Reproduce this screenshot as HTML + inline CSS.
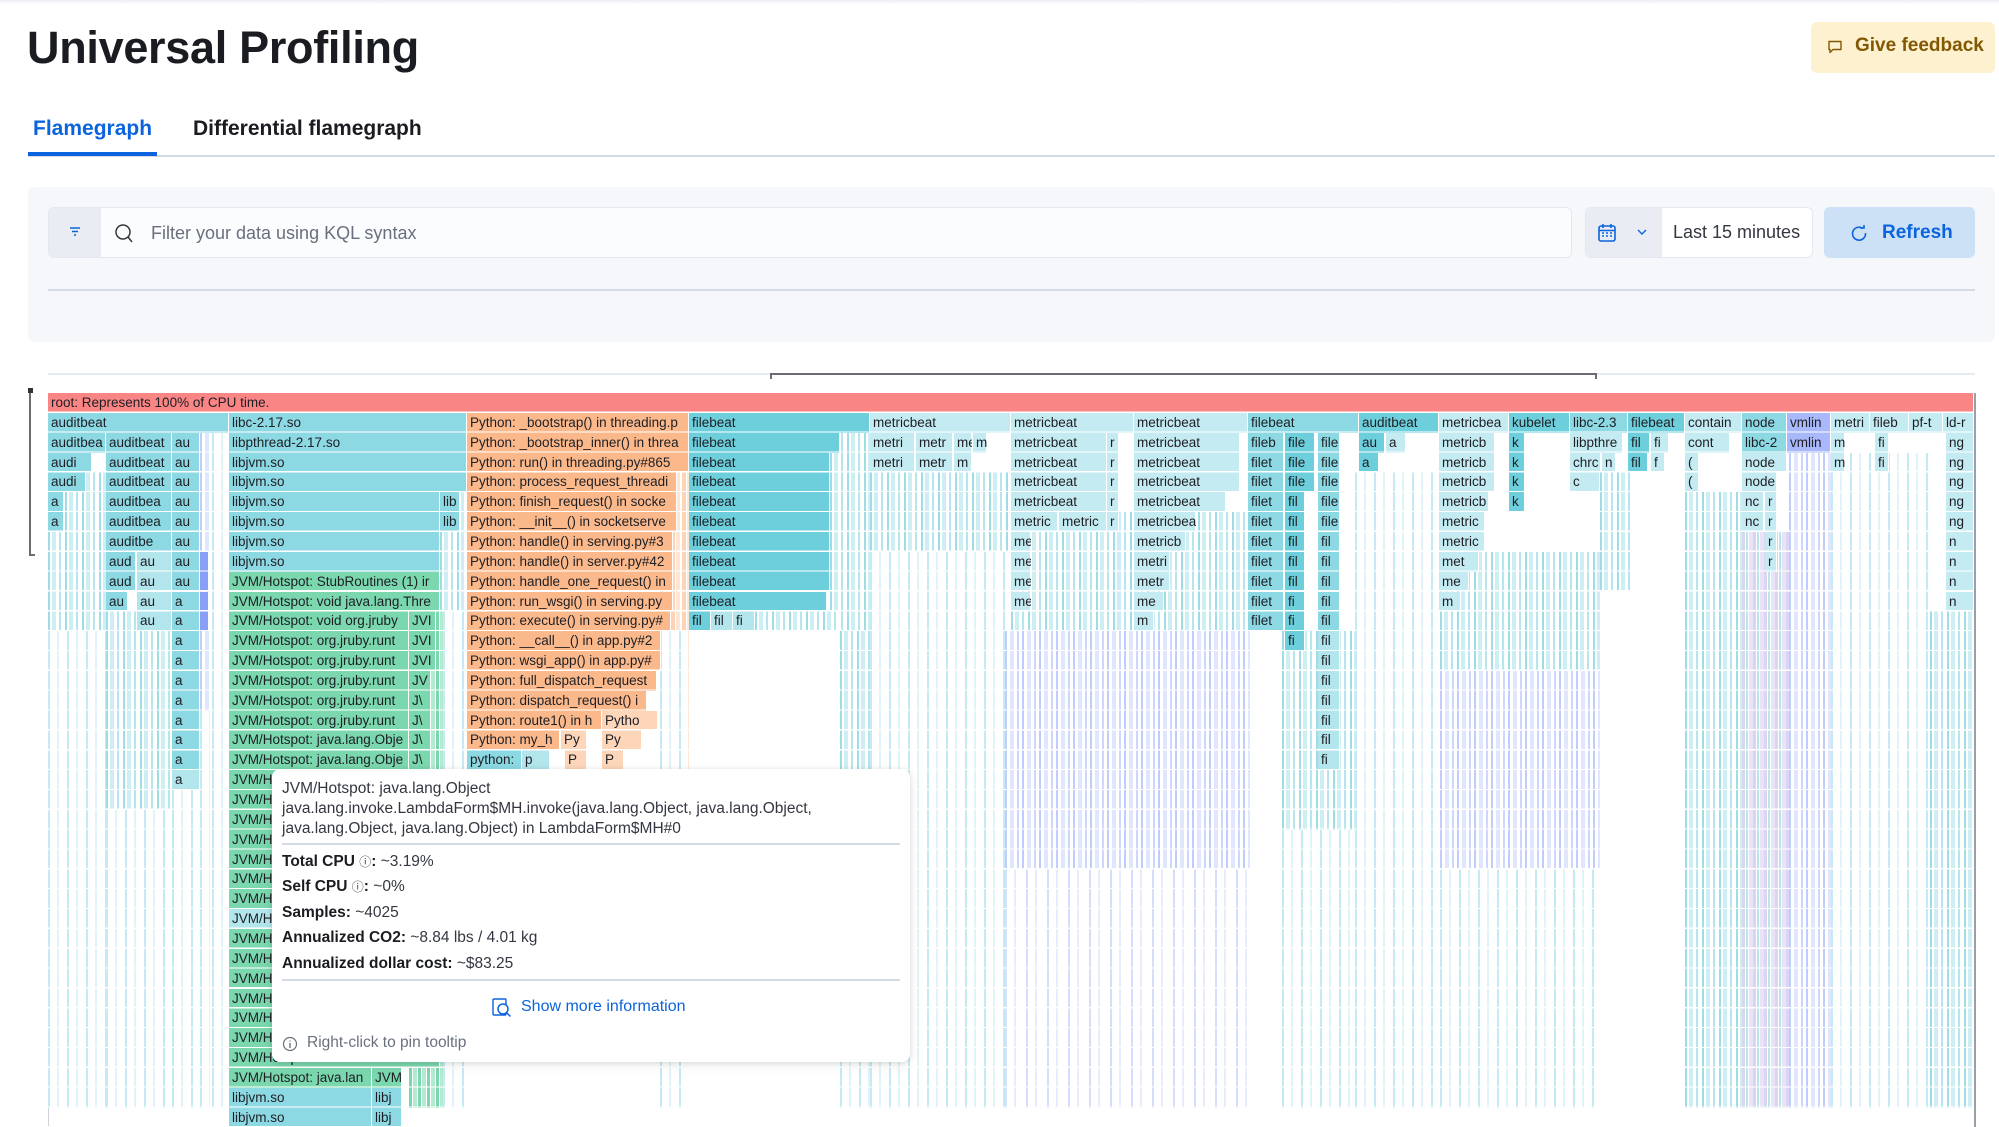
<!DOCTYPE html>
<html><head><meta charset="utf-8">
<style>
*{box-sizing:border-box;margin:0;padding:0}
body{width:1999px;height:1127px;overflow:hidden;background:#fff;font-family:"Liberation Sans",sans-serif;position:relative;color:#1a1c21}
.abs{position:absolute}
.b{position:absolute;display:block;font-style:normal;top:calc(393px + var(--r)*19.85px);height:19.85px;font-size:13.5px;line-height:20px;padding-left:3px;white-space:nowrap;overflow:hidden;color:#1d1e24;box-shadow:inset -1px 0 #fff}
.s{position:absolute;display:block;top:calc(393px + var(--r)*19.85px);height:calc(var(--n)*19.85px)}
.T{background:#8dd9e3}.F{background:#6dcfdc}.M{background:#c4ebf1}.O{background:#fbb98b}.O2{background:#fdd6ba}.G{background:#7ad7ae}.V{background:#a9b8fb}.R{background:#fa8585}.L{background:#b2e5ec}.B{background:#8a9ff8}
.sA{background:repeating-linear-gradient(90deg,#9edde6 0 2px,#fff 2px 4px,#cdeef3 4px 8px,#fff 8px 11px,#b5e6ed 11px 13px,#fff 13px 17px)}
.sB{background:repeating-linear-gradient(90deg,#c0ccfc 0 2px,#fff 2px 5px,#dfe6fe 5px 9px,#fff 9px 12px,#cdd7fd 12px 14px,#fff 14px 17px)}
.sC{background:repeating-linear-gradient(90deg,#c3ebf1 0 2px,#fff 2px 9px,#e0f4f7 9px 11px,#fff 11px 19px)}
.sD{background:repeating-linear-gradient(90deg,#d5defd 0 2px,#fff 2px 9px,#e8edfe 9px 11px,#fff 11px 21px)}
.sE{background:repeating-linear-gradient(90deg,#dcd5f0 0 3px,#fff 3px 4px,#b8e4eb 4px 6px,#fff 6px 7px,#e8e3f6 7px 11px)}
.sG{background:repeating-linear-gradient(90deg,#7ad7ae 0 3px,#fff 3px 4px,#b5ead2 4px 8px,#fff 8px 9px)}
.sO{background:repeating-linear-gradient(90deg,#fcd3b5 0 4px,#fff 4px 5px,#fde6d4 5px 9px,#fff 9px 11px)}
.gaps{position:absolute;left:48px;top:393px;width:1926px;height:734px;background:repeating-linear-gradient(180deg,transparent 0 18.6px,#fff 18.6px 19.85px);pointer-events:none}
.tt{position:absolute;left:272px;top:769px;width:638px;height:293px;background:#fff;border-radius:8px;box-shadow:0 1px 6px rgba(0,0,0,.12),0 4px 14px rgba(0,0,0,.06);font-size:15.5px;color:#343741}
.tt .ln{position:absolute;left:10px;white-space:nowrap}
.tt b{color:#1a1c21}
</style></head><body>
<div class="abs" style="left:0;top:0;width:1999px;height:4px;background:linear-gradient(#eceef2,#fff)"></div>
<div class="abs" style="left:27px;top:26px;font-size:45px;font-weight:bold;line-height:44px;color:#1a1c21;letter-spacing:-0.3px">Universal Profiling</div>
<div class="abs" style="left:1811px;top:22px;width:184px;height:51px;background:#fdf1d0;border-radius:6px"></div>
<svg class="abs" style="left:1827px;top:39px" width="16" height="16" viewBox="0 0 16 16"><path d="M2 2.5h12v8H6l-3 3v-3H2z" fill="none" stroke="#825803" stroke-width="1.4" stroke-linejoin="round"/></svg>
<div class="abs" style="left:1855px;top:35px;font-size:19px;font-weight:bold;color:#825803;line-height:22px">Give feedback</div>
<div class="abs" style="left:33px;top:117px;font-size:21px;font-weight:bold;color:#0b64dd">Flamegraph</div>
<div class="abs" style="left:193px;top:117px;font-size:21px;font-weight:bold;color:#1a1c21">Differential flamegraph</div>
<div class="abs" style="left:28px;top:155px;width:1967px;height:2px;background:#d3dae6"></div>
<div class="abs" style="left:28px;top:152px;width:129px;height:4px;background:#0b64dd"></div>
<div class="abs" style="left:28px;top:187px;width:1967px;height:155px;background:#f5f7fa;border-radius:6px"></div>
<div class="abs" style="left:48px;top:207px;width:1524px;height:51px;background:#fbfcfd;border:1.5px solid #e3e8f0;border-radius:6px"></div>
<div class="abs" style="left:49px;top:208px;width:52px;height:49px;background:#e9edf3;border-radius:5px 0 0 5px"></div>
<svg class="abs" style="left:68px;top:226px" width="14" height="12" viewBox="0 0 14 12"><path d="M2 2h10M4 5.5h6M6 9h2" stroke="#0b64dd" stroke-width="1.4"/></svg>
<svg class="abs" style="left:114px;top:223px" width="20" height="22" viewBox="0 0 20 22"><circle cx="9" cy="9" r="7" fill="none" stroke="#343741" stroke-width="1.5"/><path d="M14 14l4 5" stroke="#343741" stroke-width="1.5"/></svg>
<div class="abs" style="left:151px;top:223px;font-size:18px;color:#69707d">Filter your data using KQL syntax</div>
<div class="abs" style="left:1585px;top:207px;width:228px;height:51px;background:#fff;border:1.5px solid #e3e8f0;border-radius:6px"></div>
<div class="abs" style="left:1586px;top:208px;width:76px;height:49px;background:#e9edf3;border-radius:5px 0 0 5px"></div>
<svg class="abs" style="left:1597px;top:223px" width="20" height="20" viewBox="0 0 20 20"><rect x="2" y="3" width="16" height="15" rx="2" fill="none" stroke="#0b64dd" stroke-width="1.6"/><path d="M2 7.5h16M6 1v4M14 1v4" stroke="#0b64dd" stroke-width="1.6"/><path d="M5 10h2M9 10h2M13 10h2M5 13h2M9 13h2M13 13h2" stroke="#0b64dd" stroke-width="1.5"/></svg>
<svg class="abs" style="left:1636px;top:227px" width="12" height="10" viewBox="0 0 12 10"><path d="M2 3l4 4 4-4" fill="none" stroke="#0b64dd" stroke-width="1.4"/></svg>
<div class="abs" style="left:1673px;top:222px;font-size:18px;color:#343741">Last 15 minutes</div>
<div class="abs" style="left:1824px;top:207px;width:151px;height:51px;background:#cce1f5;border-radius:6px"></div>
<svg class="abs" style="left:1850px;top:223px" width="18" height="20" viewBox="0 0 18 20"><path d="M13 5.5A6.5 6.5 0 1 0 15.5 10" fill="none" stroke="#0b64dd" stroke-width="1.6"/><path d="M10 3h4v-3" fill="none" stroke="#0b64dd" stroke-width="1.6" transform="translate(0,2)"/></svg>
<div class="abs" style="left:1882px;top:222px;font-size:19px;font-weight:bold;color:#0b64dd">Refresh</div>
<div class="abs" style="left:48px;top:289px;width:1927px;height:2px;background:#d3dae6"></div>
<div class="abs" style="left:48px;top:373px;width:1927px;height:2px;background:#e6ebf2"></div>
<div class="abs" style="left:770px;top:373px;width:826px;height:2px;background:#6a6d72"></div>
<div class="abs" style="left:770px;top:373px;width:1.5px;height:6px;background:#6a6d72"></div>
<div class="abs" style="left:1595px;top:373px;width:1.5px;height:6px;background:#6a6d72"></div>
<div class="abs" style="left:29px;top:388px;width:2px;height:168px;background:#6a6d72"></div>
<div class="abs" style="left:28px;top:388px;width:5px;height:5px;background:#333"></div>
<div class="abs" style="left:29px;top:554px;width:6px;height:2px;background:#6a6d72"></div>
<div class="abs" style="left:48px;top:393px;width:1px;height:734px;background:#d0d4da"></div>
<div class="abs" style="left:1974px;top:393px;width:1.5px;height:734px;background:#9aa0a8"></div>

<!-- stripes (background) -->
<i class="s sA" style="--r:4;--n:8;left:48px;width:58px"></i>
<i class="s sC" style="--r:12;--n:24;left:48px;width:58px"></i>
<i class="s sA" style="--r:11;--n:10;left:106px;width:66px"></i>
<i class="s sC" style="--r:21;--n:15;left:106px;width:66px"></i>
<i class="s sC" style="--r:19;--n:17;left:172px;width:28px"></i>
<i class="s sB" style="--r:2;--n:14;left:200px;width:10px"></i>
<i class="s sC" style="--r:16;--n:20;left:200px;width:10px"></i>
<i class="s sC" style="--r:2;--n:34;left:212px;width:14px"></i>
<i class="s sG" style="--r:11;--n:25;left:409px;width:34px"></i>
<i class="s sA" style="--r:5;--n:6;left:440px;width:24px"></i>
<i class="s sC" style="--r:11;--n:25;left:443px;width:22px"></i>
<i class="s sO" style="--r:4;--n:15;left:660px;width:29px"></i>
<i class="s sC" style="--r:12;--n:24;left:660px;width:28px"></i>
<i class="s sA" style="--r:2;--n:10;left:830px;width:40px"></i>
<i class="s sA" style="--r:12;--n:10;left:840px;width:30px"></i>
<i class="s sC" style="--r:22;--n:14;left:840px;width:30px"></i>
<i class="s sA" style="--r:4;--n:4;left:870px;width:140px"></i>
<i class="s sC" style="--r:8;--n:28;left:870px;width:135px"></i>
<i class="s sA" style="--r:6;--n:6;left:1011px;width:239px"></i>
<i class="s sB" style="--r:12;--n:12;left:1005px;width:245px"></i>
<i class="s sD" style="--r:24;--n:12;left:1005px;width:245px"></i>
<i class="s sA" style="--r:12;--n:10;left:1282px;width:73px"></i>
<i class="s sC" style="--r:22;--n:14;left:1282px;width:73px"></i>
<i class="s sC" style="--r:4;--n:32;left:1355px;width:85px"></i>
<i class="s sA" style="--r:8;--n:6;left:1440px;width:160px"></i>
<i class="s sB" style="--r:14;--n:10;left:1440px;width:160px"></i>
<i class="s sC" style="--r:24;--n:12;left:1440px;width:160px"></i>
<i class="s sA" style="--r:4;--n:6;left:1600px;width:30px"></i>
<i class="s sA" style="--r:5;--n:31;left:1685px;width:57px"></i>
<i class="s sE" style="--r:7;--n:29;left:1742px;width:47px"></i>
<i class="s sB" style="--r:3;--n:33;left:1789px;width:42px"></i>
<i class="s sC" style="--r:3;--n:33;left:1831px;width:100px"></i>
<i class="s sA" style="--r:11;--n:25;left:1930px;width:44px"></i>

<!-- row 0 -->
<i class="b R" style="--r:0;left:48px;width:1926px">root: Represents 100% of CPU time.</i>
<!-- row 1 -->
<i class="b T" style="--r:1;left:48px;width:181px">auditbeat</i>
<i class="b T" style="--r:1;left:229px;width:238px">libc-2.17.so</i>
<i class="b O" style="--r:1;left:467px;width:222px">Python: _bootstrap() in threading.p</i>
<i class="b F" style="--r:1;left:689px;width:181px">filebeat</i>
<i class="b M" style="--r:1;left:870px;width:141px">metricbeat</i>
<i class="b M" style="--r:1;left:1011px;width:123px">metricbeat</i>
<i class="b M" style="--r:1;left:1134px;width:114px">metricbeat</i>
<i class="b T" style="--r:1;left:1248px;width:111px">filebeat</i>
<i class="b F" style="--r:1;left:1359px;width:80px">auditbeat</i>
<i class="b M" style="--r:1;left:1439px;width:70px">metricbea</i>
<i class="b F" style="--r:1;left:1509px;width:61px">kubelet</i>
<i class="b T" style="--r:1;left:1570px;width:58px">libc-2.3</i>
<i class="b F" style="--r:1;left:1628px;width:57px">filebeat</i>
<i class="b M" style="--r:1;left:1685px;width:57px">contain</i>
<i class="b T" style="--r:1;left:1742px;width:45px">node</i>
<i class="b V" style="--r:1;left:1787px;width:44px">vmlin</i>
<i class="b M" style="--r:1;left:1831px;width:39px">metri</i>
<i class="b M" style="--r:1;left:1870px;width:39px">fileb</i>
<i class="b M" style="--r:1;left:1909px;width:34px">pf-t</i>
<i class="b M" style="--r:1;left:1943px;width:31px">ld-r</i>
<!-- rows 2-4 left -->
<i class="b T" style="--r:2;left:48px;width:58px">auditbea</i>
<i class="b T" style="--r:2;left:106px;width:66px">auditbeat</i>
<i class="b T" style="--r:2;left:172px;width:28px">au</i>
<i class="b T" style="--r:2;left:229px;width:238px">libpthread-2.17.so</i>
<i class="b O" style="--r:2;left:467px;width:222px">Python: _bootstrap_inner() in threa</i>
<i class="b F" style="--r:2;left:689px;width:151px">filebeat</i>
<i class="b T" style="--r:3;left:48px;width:44px">audi</i>
<i class="b T" style="--r:3;left:106px;width:66px">auditbeat</i>
<i class="b T" style="--r:3;left:172px;width:28px">au</i>
<i class="b T" style="--r:3;left:229px;width:238px">libjvm.so</i>
<i class="b O" style="--r:3;left:467px;width:222px">Python: run() in threading.py#865</i>
<i class="b F" style="--r:3;left:689px;width:141px">filebeat</i>
<i class="b T" style="--r:4;left:48px;width:38px">audi</i>
<i class="b T" style="--r:4;left:106px;width:66px">auditbeat</i>
<i class="b T" style="--r:4;left:172px;width:28px">au</i>
<i class="b T" style="--r:4;left:229px;width:238px">libjvm.so</i>
<i class="b O" style="--r:4;left:467px;width:210px">Python: process_request_threadi</i>
<i class="b F" style="--r:4;left:689px;width:141px">filebeat</i>
<!-- rows 5-10 -->
<i class="b T" style="--r:5;left:48px;width:16px">a</i>
<i class="b T" style="--r:5;left:106px;width:66px">auditbea</i>
<i class="b T" style="--r:5;left:172px;width:28px">au</i>
<i class="b T" style="--r:5;left:229px;width:211px">libjvm.so</i>
<i class="b T" style="--r:5;left:440px;width:20px">lib</i>
<i class="b O" style="--r:5;left:467px;width:210px">Python: finish_request() in socke</i>
<i class="b F" style="--r:5;left:689px;width:141px">filebeat</i>
<i class="b T" style="--r:6;left:48px;width:16px">a</i>
<i class="b T" style="--r:6;left:106px;width:66px">auditbea</i>
<i class="b T" style="--r:6;left:172px;width:28px">au</i>
<i class="b T" style="--r:6;left:229px;width:211px">libjvm.so</i>
<i class="b T" style="--r:6;left:440px;width:20px">lib</i>
<i class="b O" style="--r:6;left:467px;width:210px">Python: __init__() in socketserve</i>
<i class="b F" style="--r:6;left:689px;width:141px">filebeat</i>
<i class="b T" style="--r:7;left:106px;width:66px">auditbe</i>
<i class="b T" style="--r:7;left:172px;width:28px">au</i>
<i class="b T" style="--r:7;left:229px;width:211px">libjvm.so</i>
<i class="b O" style="--r:7;left:467px;width:206px">Python: handle() in serving.py#3</i>
<i class="b F" style="--r:7;left:689px;width:141px">filebeat</i>
<i class="b T" style="--r:8;left:106px;width:30px">aud</i>
<i class="b L" style="--r:8;left:137px;width:35px">au</i>
<i class="b T" style="--r:8;left:172px;width:28px">au</i>
<i class="b B" style="--r:8;left:200px;width:9px"></i>
<i class="b T" style="--r:8;left:229px;width:211px">libjvm.so</i>
<i class="b O" style="--r:8;left:467px;width:206px">Python: handle() in server.py#42</i>
<i class="b F" style="--r:8;left:689px;width:141px">filebeat</i>
<i class="b T" style="--r:9;left:106px;width:30px">aud</i>
<i class="b L" style="--r:9;left:137px;width:35px">au</i>
<i class="b T" style="--r:9;left:172px;width:28px">au</i>
<i class="b B" style="--r:9;left:200px;width:9px"></i>
<i class="b G" style="--r:9;left:229px;width:211px">JVM/Hotspot: StubRoutines (1) ir</i>
<i class="b O" style="--r:9;left:467px;width:206px">Python: handle_one_request() in</i>
<i class="b F" style="--r:9;left:689px;width:141px">filebeat</i>
<i class="b T" style="--r:10;left:106px;width:22px">au</i>
<i class="b L" style="--r:10;left:137px;width:35px">au</i>
<i class="b T" style="--r:10;left:172px;width:28px">a</i>
<i class="b B" style="--r:10;left:200px;width:9px"></i>
<i class="b G" style="--r:10;left:229px;width:211px">JVM/Hotspot: void java.lang.Thre</i>
<i class="b O" style="--r:10;left:467px;width:206px">Python: run_wsgi() in serving.py</i>
<i class="b F" style="--r:10;left:689px;width:138px">filebeat</i>
<!-- rows 11-18 -->
<i class="b L" style="--r:11;left:137px;width:35px">au</i>
<i class="b T" style="--r:11;left:172px;width:28px">a</i>
<i class="b B" style="--r:11;left:200px;width:9px"></i>
<i class="b G" style="--r:11;left:229px;width:180px">JVM/Hotspot: void org.jruby</i>
<i class="b G" style="--r:11;left:409px;width:27px">JVI</i>
<i class="b O" style="--r:11;left:467px;width:204px">Python: execute() in serving.py#</i>
<i class="b F" style="--r:11;left:689px;width:22px">fil</i>
<i class="b L" style="--r:11;left:711px;width:22px">fil</i>
<i class="b L" style="--r:11;left:733px;width:22px">fi</i>
<i class="b sA" style="--r:11;left:755px;width:85px"></i>
<i class="b T" style="--r:12;left:172px;width:28px">a</i>
<i class="b G" style="--r:12;left:229px;width:180px">JVM/Hotspot: org.jruby.runt</i>
<i class="b G" style="--r:12;left:409px;width:27px">JVI</i>
<i class="b O" style="--r:12;left:467px;width:194px">Python: __call__() in app.py#2</i>
<i class="b T" style="--r:13;left:172px;width:28px">a</i>
<i class="b G" style="--r:13;left:229px;width:180px">JVM/Hotspot: org.jruby.runt</i>
<i class="b G" style="--r:13;left:409px;width:27px">JVI</i>
<i class="b O" style="--r:13;left:467px;width:194px">Python: wsgi_app() in app.py#</i>
<i class="b T" style="--r:14;left:172px;width:28px">a</i>
<i class="b G" style="--r:14;left:229px;width:180px">JVM/Hotspot: org.jruby.runt</i>
<i class="b G" style="--r:14;left:409px;width:22px">JV</i>
<i class="b O" style="--r:14;left:467px;width:190px">Python: full_dispatch_request</i>
<i class="b T" style="--r:15;left:172px;width:28px">a</i>
<i class="b G" style="--r:15;left:229px;width:180px">JVM/Hotspot: org.jruby.runt</i>
<i class="b G" style="--r:15;left:409px;width:22px">J\</i>
<i class="b O" style="--r:15;left:467px;width:180px">Python: dispatch_request() i</i>
<i class="b T" style="--r:16;left:172px;width:28px">a</i>
<i class="b G" style="--r:16;left:229px;width:180px">JVM/Hotspot: org.jruby.runt</i>
<i class="b G" style="--r:16;left:409px;width:22px">J\</i>
<i class="b O" style="--r:16;left:467px;width:135px">Python: route1() in h</i>
<i class="b O2" style="--r:16;left:602px;width:56px">Pytho</i>
<i class="b T" style="--r:17;left:172px;width:28px">a</i>
<i class="b G" style="--r:17;left:229px;width:180px">JVM/Hotspot: java.lang.Obje</i>
<i class="b G" style="--r:17;left:409px;width:22px">J\</i>
<i class="b O" style="--r:17;left:467px;width:93px">Python: my_h</i>
<i class="b O2" style="--r:17;left:561px;width:26px">Py</i>
<i class="b O2" style="--r:17;left:602px;width:40px">Py</i>
<i class="b T" style="--r:18;left:172px;width:28px">a</i>
<i class="b G" style="--r:18;left:229px;width:180px">JVM/Hotspot: java.lang.Obje</i>
<i class="b G" style="--r:18;left:409px;width:22px">J\</i>
<i class="b T" style="--r:18;left:467px;width:55px">python:</i>
<i class="b L" style="--r:18;left:522px;width:28px">p</i>
<i class="b O2" style="--r:18;left:565px;width:22px">P</i>
<i class="b O2" style="--r:18;left:602px;width:22px">P</i>
<!-- rows 19-36 JVM -->
<i class="b L" style="--r:19;left:172px;width:28px">a</i>
<i class="b G" style="--r:19;left:229px;width:211px">JVM/Hotspot</i>
<i class="b G" style="--r:20;left:229px;width:211px">JVM/Hotspot</i>
<i class="b G" style="--r:21;left:229px;width:211px">JVM/Hotspot</i>
<i class="b G" style="--r:22;left:229px;width:211px">JVM/Hotspot</i>
<i class="b G" style="--r:23;left:229px;width:211px">JVM/Hotspot</i>
<i class="b G" style="--r:24;left:229px;width:211px">JVM/Hotspot</i>
<i class="b G" style="--r:25;left:229px;width:211px">JVM/Hotspot</i>
<i class="b L" style="--r:26;left:229px;width:211px">JVM/Hotspot</i>
<i class="b G" style="--r:27;left:229px;width:211px">JVM/Hotspot</i>
<i class="b G" style="--r:28;left:229px;width:211px">JVM/Hotspot</i>
<i class="b G" style="--r:29;left:229px;width:211px">JVM/Hotspot</i>
<i class="b G" style="--r:30;left:229px;width:211px">JVM/Hotspot</i>
<i class="b G" style="--r:31;left:229px;width:211px">JVM/Hotspot</i>
<i class="b G" style="--r:32;left:229px;width:211px">JVM/Hotspot</i>
<i class="b G" style="--r:33;left:229px;width:211px">JVM/Hotspot</i>
<i class="b G" style="--r:34;left:229px;width:143px">JVM/Hotspot: java.lan</i>
<i class="b G" style="--r:34;left:372px;width:30px">JVM</i>
<i class="b T" style="--r:35;left:229px;width:143px">libjvm.so</i>
<i class="b T" style="--r:35;left:372px;width:30px">libj</i>
<i class="b T" style="--r:36;left:229px;width:143px">libjvm.so</i>
<i class="b T" style="--r:36;left:372px;width:30px">libj</i>
<!-- right side rows 2-11 -->
<i class="b M" style="--r:2;left:870px;width:45px">metri</i>
<i class="b M" style="--r:2;left:916px;width:37px">metr</i>
<i class="b M" style="--r:2;left:954px;width:18px">me</i>
<i class="b M" style="--r:2;left:973px;width:14px">m</i>
<i class="b M" style="--r:3;left:870px;width:45px">metri</i>
<i class="b M" style="--r:3;left:916px;width:37px">metr</i>
<i class="b M" style="--r:3;left:954px;width:18px">m</i>
<i class="b M" style="--r:2;left:1011px;width:96px">metricbeat</i>
<i class="b M" style="--r:3;left:1011px;width:96px">metricbeat</i>
<i class="b M" style="--r:4;left:1011px;width:96px">metricbeat</i>
<i class="b M" style="--r:5;left:1011px;width:96px">metricbeat</i>
<i class="b M" style="--r:6;left:1011px;width:47px">metric</i>
<i class="b M" style="--r:6;left:1059px;width:48px">metric</i>
<i class="b M" style="--r:7;left:1011px;width:20px">me</i>
<i class="b M" style="--r:8;left:1011px;width:20px">me</i>
<i class="b M" style="--r:9;left:1011px;width:20px">me</i>
<i class="b M" style="--r:10;left:1011px;width:20px">me</i>
<i class="b M" style="--r:2;left:1107px;width:12px">r</i>
<i class="b M" style="--r:3;left:1107px;width:12px">r</i>
<i class="b M" style="--r:4;left:1107px;width:12px">r</i>
<i class="b M" style="--r:5;left:1107px;width:12px">r</i>
<i class="b M" style="--r:6;left:1107px;width:12px">r</i>
<i class="b M" style="--r:2;left:1134px;width:106px">metricbeat</i>
<i class="b M" style="--r:3;left:1134px;width:106px">metricbeat</i>
<i class="b M" style="--r:4;left:1134px;width:106px">metricbeat</i>
<i class="b M" style="--r:5;left:1134px;width:92px">metricbeat</i>
<i class="b M" style="--r:6;left:1134px;width:62px">metricbea</i>
<i class="b M" style="--r:7;left:1134px;width:52px">metricb</i>
<i class="b M" style="--r:8;left:1134px;width:36px">metri</i>
<i class="b M" style="--r:9;left:1134px;width:36px">metr</i>
<i class="b M" style="--r:10;left:1134px;width:30px">me</i>
<i class="b M" style="--r:11;left:1134px;width:20px">m</i>
<i class="b T" style="--r:2;left:1248px;width:36px">fileb</i>
<i class="b F" style="--r:2;left:1285px;width:30px">file</i>
<i class="b T" style="--r:2;left:1318px;width:22px">file</i>
<i class="b T" style="--r:3;left:1248px;width:36px">filet</i>
<i class="b F" style="--r:3;left:1285px;width:30px">file</i>
<i class="b T" style="--r:3;left:1318px;width:22px">file</i>
<i class="b T" style="--r:4;left:1248px;width:36px">filet</i>
<i class="b F" style="--r:4;left:1285px;width:30px">file</i>
<i class="b T" style="--r:4;left:1318px;width:22px">file</i>
<i class="b T" style="--r:5;left:1248px;width:36px">filet</i>
<i class="b F" style="--r:5;left:1285px;width:20px">fil</i>
<i class="b T" style="--r:5;left:1318px;width:22px">file</i>
<i class="b T" style="--r:6;left:1248px;width:36px">filet</i>
<i class="b F" style="--r:6;left:1285px;width:20px">fil</i>
<i class="b T" style="--r:6;left:1318px;width:22px">file</i>
<i class="b T" style="--r:7;left:1248px;width:36px">filet</i>
<i class="b F" style="--r:7;left:1285px;width:20px">fil</i>
<i class="b T" style="--r:7;left:1318px;width:22px">fil</i>
<i class="b T" style="--r:8;left:1248px;width:36px">filet</i>
<i class="b F" style="--r:8;left:1285px;width:20px">fil</i>
<i class="b T" style="--r:8;left:1318px;width:22px">fil</i>
<i class="b T" style="--r:9;left:1248px;width:36px">filet</i>
<i class="b F" style="--r:9;left:1285px;width:20px">fil</i>
<i class="b T" style="--r:9;left:1318px;width:22px">fil</i>
<i class="b T" style="--r:10;left:1248px;width:36px">filet</i>
<i class="b F" style="--r:10;left:1285px;width:20px">fi</i>
<i class="b T" style="--r:10;left:1318px;width:22px">fil</i>
<i class="b T" style="--r:11;left:1248px;width:36px">filet</i>
<i class="b F" style="--r:11;left:1285px;width:20px">fi</i>
<i class="b T" style="--r:11;left:1318px;width:22px">fil</i>
<i class="b F" style="--r:12;left:1285px;width:20px">fi</i>
<i class="b L" style="--r:12;left:1318px;width:22px">fil</i>
<i class="b L" style="--r:13;left:1318px;width:22px">fil</i>
<i class="b L" style="--r:14;left:1318px;width:22px">fil</i>
<i class="b L" style="--r:15;left:1318px;width:22px">fil</i>
<i class="b L" style="--r:16;left:1318px;width:22px">fil</i>
<i class="b L" style="--r:17;left:1318px;width:22px">fil</i>
<i class="b L" style="--r:18;left:1318px;width:22px">fi</i>
<i class="b F" style="--r:2;left:1359px;width:26px">au</i>
<i class="b M" style="--r:2;left:1386px;width:20px">a</i>
<i class="b F" style="--r:3;left:1359px;width:20px">a</i>
<i class="b M" style="--r:2;left:1439px;width:56px">metricb</i>
<i class="b M" style="--r:3;left:1439px;width:56px">metricb</i>
<i class="b M" style="--r:4;left:1439px;width:56px">metricb</i>
<i class="b M" style="--r:5;left:1439px;width:50px">metricb</i>
<i class="b M" style="--r:6;left:1439px;width:46px">metric</i>
<i class="b M" style="--r:7;left:1439px;width:46px">metric</i>
<i class="b M" style="--r:8;left:1439px;width:40px">met</i>
<i class="b M" style="--r:9;left:1439px;width:30px">me</i>
<i class="b M" style="--r:10;left:1439px;width:22px">m</i>
<i class="b F" style="--r:2;left:1509px;width:16px">k</i>
<i class="b F" style="--r:3;left:1509px;width:16px">k</i>
<i class="b F" style="--r:4;left:1509px;width:16px">k</i>
<i class="b F" style="--r:5;left:1509px;width:16px">k</i>
<i class="b M" style="--r:2;left:1570px;width:53px">libpthre</i>
<i class="b M" style="--r:3;left:1570px;width:31px">chrc</i>
<i class="b M" style="--r:3;left:1602px;width:14px">n</i>
<i class="b M" style="--r:4;left:1570px;width:30px">c</i>
<i class="b F" style="--r:2;left:1628px;width:22px">fil</i>
<i class="b M" style="--r:2;left:1651px;width:18px">fi</i>
<i class="b F" style="--r:3;left:1628px;width:20px">fil</i>
<i class="b M" style="--r:3;left:1651px;width:14px">f</i>
<i class="b M" style="--r:2;left:1685px;width:45px">cont</i>
<i class="b M" style="--r:3;left:1685px;width:14px">(</i>
<i class="b M" style="--r:4;left:1685px;width:14px">(</i>
<i class="b T" style="--r:2;left:1742px;width:45px">libc-2</i>
<i class="b M" style="--r:3;left:1742px;width:45px">node</i>
<i class="b M" style="--r:4;left:1742px;width:35px">node</i>
<i class="b M" style="--r:5;left:1742px;width:22px">nc</i>
<i class="b M" style="--r:6;left:1742px;width:22px">nc</i>
<i class="b M" style="--r:5;left:1765px;width:12px">r</i>
<i class="b M" style="--r:6;left:1765px;width:12px">r</i>
<i class="b M" style="--r:7;left:1765px;width:12px">r</i>
<i class="b M" style="--r:8;left:1765px;width:12px">r</i>
<i class="b V" style="--r:2;left:1787px;width:44px">vmlin</i>
<i class="b M" style="--r:2;left:1831px;width:14px">m</i>
<i class="b M" style="--r:3;left:1831px;width:14px">m</i>
<i class="b M" style="--r:2;left:1875px;width:14px">fi</i>
<i class="b M" style="--r:3;left:1875px;width:14px">fi</i>
<i class="b M" style="--r:2;left:1946px;width:28px">ng</i>
<i class="b M" style="--r:3;left:1946px;width:28px">ng</i>
<i class="b M" style="--r:4;left:1946px;width:28px">ng</i>
<i class="b M" style="--r:5;left:1946px;width:28px">ng</i>
<i class="b M" style="--r:6;left:1946px;width:28px">ng</i>
<i class="b M" style="--r:7;left:1946px;width:28px">n</i>
<i class="b M" style="--r:8;left:1946px;width:28px">n</i>
<i class="b M" style="--r:9;left:1946px;width:28px">n</i>
<i class="b M" style="--r:10;left:1946px;width:28px">n</i>

<div class="gaps"></div>

<div class="tt">
<div class="ln" style="top:11px">JVM/Hotspot: java.lang.Object</div>
<div class="ln" style="top:31px">java.lang.invoke.LambdaForm$MH.invoke(java.lang.Object, java.lang.Object,</div>
<div class="ln" style="top:51px">java.lang.Object, java.lang.Object) in LambdaForm$MH#0</div>
<div class="abs" style="left:10px;top:74px;width:618px;height:1.5px;background:#d3dae6"></div>
<div class="ln" style="top:84px"><b>Total CPU</b> <span style="font-size:12px">ⓘ</span><b>:</b> ~3.19%</div>
<div class="ln" style="top:109px"><b>Self CPU</b> <span style="font-size:12px">ⓘ</span><b>:</b> ~0%</div>
<div class="ln" style="top:135px"><b>Samples:</b> ~4025</div>
<div class="ln" style="top:160px"><b>Annualized CO2:</b> ~8.84 lbs / 4.01 kg</div>
<div class="ln" style="top:186px"><b>Annualized dollar cost:</b> ~$83.25</div>
<div class="abs" style="left:10px;top:210px;width:618px;height:1.5px;background:#d3dae6"></div>
<svg class="abs" style="left:219px;top:228px" width="22" height="22" viewBox="0 0 22 22"><rect x="2" y="2" width="13" height="16" rx="1" fill="none" stroke="#0b64dd" stroke-width="1.4"/><circle cx="12" cy="12" r="5" fill="#fff" stroke="#0b64dd" stroke-width="1.5"/><path d="M15.5 15.5l4 4" stroke="#0b64dd" stroke-width="1.5"/></svg>
<div class="ln" style="left:249px;top:229px;color:#0b64dd;font-size:16px">Show more information</div>
<svg class="abs" style="left:10px;top:267px" width="16" height="16" viewBox="0 0 16 16"><circle cx="8" cy="8" r="6.5" fill="none" stroke="#69707d" stroke-width="1.2"/><path d="M8 7v5M8 4.5v1" stroke="#69707d" stroke-width="1.4"/></svg>
<div class="ln" style="left:35px;top:265px;color:#69707d">Right-click to pin tooltip</div>
</div>
</body></html>
